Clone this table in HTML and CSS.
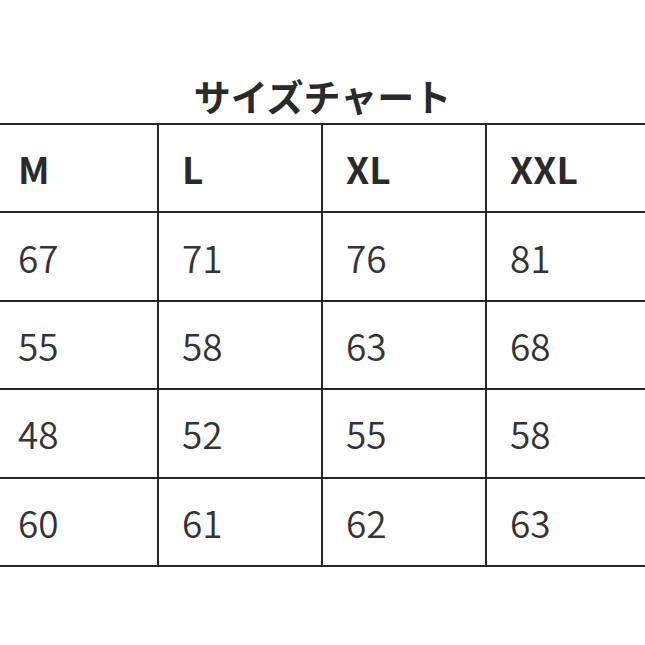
FILE: index.html
```html
<!DOCTYPE html>
<html lang="ja">
<head>
<meta charset="utf-8">
<title>サイズチャート</title>
<link rel="stylesheet" href="styles.css">
</head>
<body>
<div class="page">
  <h1 class="title">サイズチャート</h1>
  <div class="chart">
    <div class="cell head">M</div>
    <div class="cell head">L</div>
    <div class="cell head">XL</div>
    <div class="cell head">XXL</div>
    <div class="cell">67</div>
    <div class="cell">71</div>
    <div class="cell">76</div>
    <div class="cell">81</div>
    <div class="cell">55</div>
    <div class="cell">58</div>
    <div class="cell">63</div>
    <div class="cell">68</div>
    <div class="cell">48</div>
    <div class="cell">52</div>
    <div class="cell">55</div>
    <div class="cell">58</div>
    <div class="cell">60</div>
    <div class="cell">61</div>
    <div class="cell">62</div>
    <div class="cell">63</div>
  </div>
</div>
</body>
</html>
```
FILE: styles.css
```css
html, body {
  margin: 0;
  padding: 0;
  background: #ffffff;
  overflow: hidden;
}

.page {
  width: 645px;
  height: 645px;
  padding-top: 71px;
  box-sizing: border-box;
  font-family: "Noto Sans CJK JP", "Noto Sans", sans-serif;
  color: #333333;
}

.title {
  margin: 0 0 2px 0;
  height: 50px;
  line-height: 50px;
  font-size: 37px;
  font-weight: 700;
  text-align: center;
  color: #2a2a2a;
}

.chart {
  display: grid;
  grid-template-columns: repeat(4, 162px);
  grid-auto-rows: 86.4px;
  gap: 2px;
  padding: 2px;
  margin-left: -7px;
  width: max-content;
  background: #262626;
}

.cell {
  background: #ffffff;
  display: flex;
  align-items: center;
  padding-left: 23px;
  font-size: 37px;
  font-weight: 350;
  color: #333333;
}

.cell.head {
  font-weight: 700;
  color: #2a2a2a;
}
```
